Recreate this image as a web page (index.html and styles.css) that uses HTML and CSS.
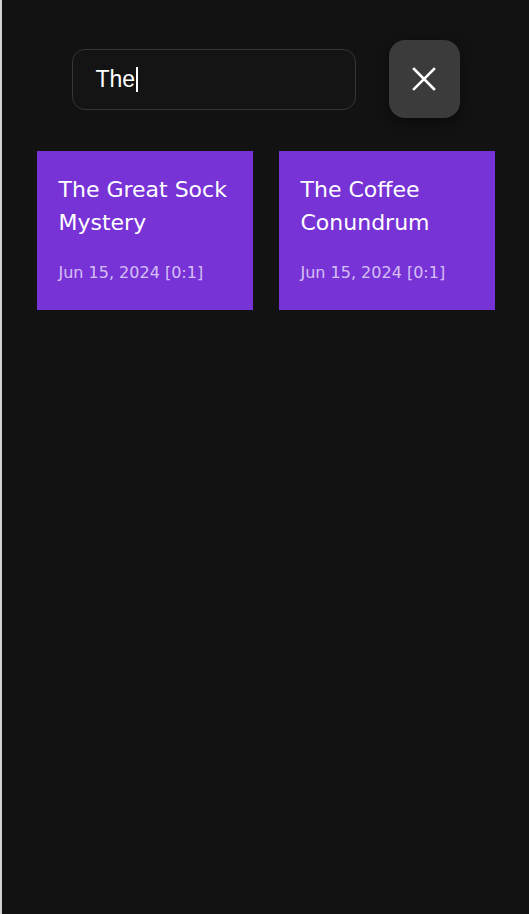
FILE: index.html
```html
<!DOCTYPE html>
<html lang="en">
<head>
<meta charset="utf-8">
<title>Search</title>
<link rel="stylesheet" href="styles.css">
</head>
<body>
<main class="page">
  <div class="search-row">
    <div class="search-input" role="textbox" aria-label="Search"><span class="search-text">The</span><span class="caret"></span></div>
    <button class="close-btn" aria-label="Close">
      <svg viewBox="0 0 24 24" width="26" height="26" aria-hidden="true">
        <path d="M2.8 2.8 L21.2 21.2 M21.2 2.8 L2.8 21.2" stroke="#fff" stroke-width="2.4" stroke-linecap="square" fill="none"/>
      </svg>
    </button>
  </div>
  <div class="cards">
    <article class="card">
      <h2 class="card-title">The Great Sock Mystery</h2>
      <p class="card-date">Jun 15, 2024 [0:1]</p>
    </article>
    <article class="card">
      <h2 class="card-title">The Coffee Conundrum</h2>
      <p class="card-date">Jun 15, 2024 [0:1]</p>
    </article>
  </div>
</main>
</body>
</html>
```

FILE: styles.css
```css
html, body {
  margin: 0;
  padding: 0;
  height: 100%;
}
body {
  background: #121212;
  border-left: 2px solid #d2d2d2;
  box-sizing: border-box;
  font-family: "DejaVu Sans", sans-serif;
}
.page {
  display: flex;
  flex-direction: column;
  align-items: center;
  padding-top: 40px;
}
.search-row {
  display: flex;
  align-items: center;
  gap: 33px;
}
.search-input {
  width: 284px;
  height: 61px;
  box-sizing: border-box;
  background: #141414;
  border: 1px solid #363636;
  border-radius: 13px;
  padding: 0 23px;
  color: #fff;
  font-family: "Liberation Sans", Arial, sans-serif;
  font-size: 23px;
  display: flex;
  align-items: center;
}
.caret {
  display: inline-block;
  width: 2px;
  height: 25px;
  margin-left: 1px;
  background: #fff;
}
.close-btn {
  width: 71px;
  height: 78px;
  border: none;
  border-radius: 16px;
  background: #3b3b3b;
  box-shadow: 0 4px 14px rgba(0, 0, 0, 0.45);
  display: flex;
  align-items: center;
  justify-content: center;
  padding: 0;
  cursor: pointer;
}
.cards {
  margin-top: 33px;
  display: grid;
  grid-template-columns: 216px 216px;
  gap: 26px;
}
.card {
  background: #7733d6;
  min-height: 159px;
  box-sizing: border-box;
  padding: 22px 22px 24px;
}
.card-title {
  margin: 0;
  color: #fff;
  font-size: 22px;
  font-weight: 400;
  line-height: 33px;
}
.card-date {
  margin: 22px 0 0;
  color: rgba(240, 228, 255, 0.8);
  font-size: 16px;
  line-height: 24px;
}
```
